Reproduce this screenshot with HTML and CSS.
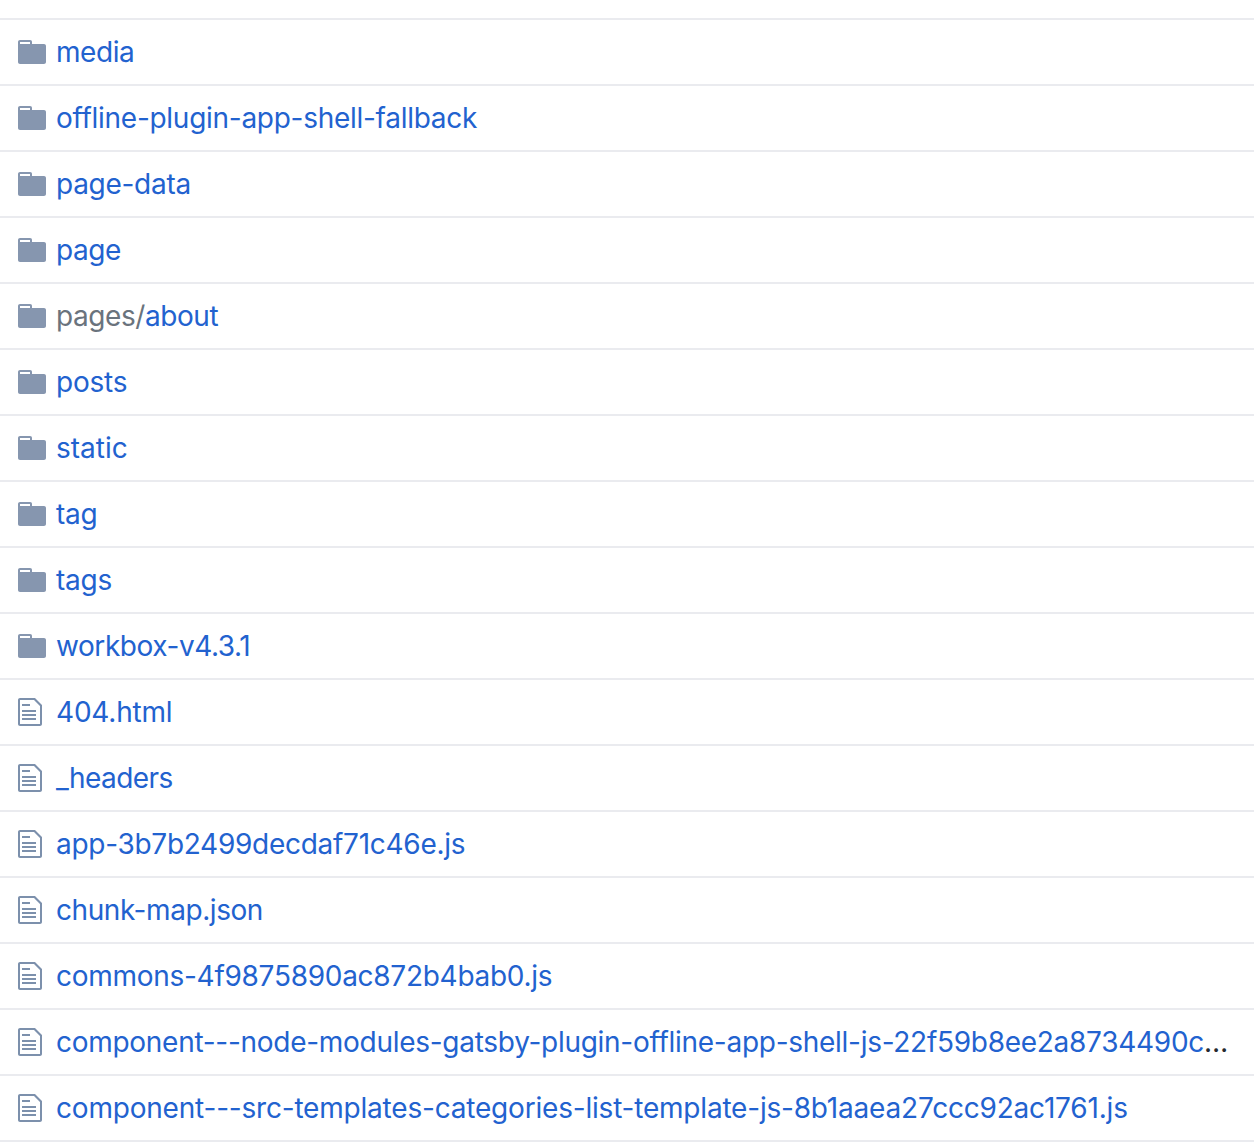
FILE: index.html
```html
<!DOCTYPE html>
<html lang="en">
<head>
<meta charset="utf-8">
<title>Files</title>
<link rel="stylesheet" href="styles.css">
</head>
<body>
<svg class="sprite" aria-hidden="true">
<symbol id="dir" viewBox="0 0 14 16"><path fill-rule="evenodd" d="M13 4H7V3c0-.66-.31-1-1-1H1c-.55 0-1 .45-1 1v10c0 .55.45 1 1 1h12c.55 0 1-.45 1-1V5c0-.55-.45-1-1-1zM6 4H1V3h5v1z"/></symbol>
<symbol id="file" viewBox="0 0 12 16"><path fill-rule="evenodd" d="M6 5H2V4h4v1zM2 8h7V7H2v1zm0 2h7V9H2v1zm0 2h7v-1H2v1zm10-7.500V14c0 .55-.45 1-1 1H1c-.55 0-1-.45-1-1V2c0-.55.45-1 1-1h7.500L12 4.500zM11 5L8 2H1v12h10V5z"/></symbol>
</svg>
<ul class="files">
<li class="row"><svg class="icon dir"><use href="#dir"/></svg><span class="name tight"><a>media</a></span></li>
<li class="row"><svg class="icon dir"><use href="#dir"/></svg><span class="name snug"><a>offline-plugin-app-shell-fallback</a></span></li>
<li class="row"><svg class="icon dir"><use href="#dir"/></svg><span class="name snug"><a>page-data</a></span></li>
<li class="row"><svg class="icon dir"><use href="#dir"/></svg><span class="name tight"><a>page</a></span></li>
<li class="row"><svg class="icon dir"><use href="#dir"/></svg><span class="name tight"><span class="parent">pages/</span><a>about</a></span></li>
<li class="row"><svg class="icon dir"><use href="#dir"/></svg><span class="name light"><a>posts</a></span></li>
<li class="row"><svg class="icon dir"><use href="#dir"/></svg><span class="name"><a>static</a></span></li>
<li class="row"><svg class="icon dir"><use href="#dir"/></svg><span class="name light"><a>tag</a></span></li>
<li class="row"><svg class="icon dir"><use href="#dir"/></svg><span class="name light"><a>tags</a></span></li>
<li class="row"><svg class="icon dir"><use href="#dir"/></svg><span class="name tight"><a>workbox-v4.3.1</a></span></li>
<li class="row"><svg class="icon file"><use href="#file"/></svg><span class="name light"><a>404.html</a></span></li>
<li class="row"><svg class="icon file"><use href="#file"/></svg><span class="name tighter"><a>_headers</a></span></li>
<li class="row"><svg class="icon file"><use href="#file"/></svg><span class="name snug"><a>app-3b7b2499decdaf71c46e.js</a></span></li>
<li class="row"><svg class="icon file"><use href="#file"/></svg><span class="name tight"><a>chunk-map.json</a></span></li>
<li class="row"><svg class="icon file"><use href="#file"/></svg><span class="name snug"><a>commons-4f9875890ac872b4bab0.js</a></span></li>
<li class="row"><svg class="icon file"><use href="#file"/></svg><span class="name snug"><a>component---node-modules-gatsby-plugin-offline-app-shell-js-22f59b8ee2a8734490c</a><span class="more">…</span></span></li>
<li class="row"><svg class="icon file"><use href="#file"/></svg><span class="name light"><a>component---src-templates-categories-list-template-js-8b1aaea27ccc92ac1761.js</a></span></li>
</ul>
</body>
</html>
```

FILE: styles.css
```css
body {
  margin: 0;
  background: #fff;
  color: #24292e;
  font: 430 28px/40px Inter, "Liberation Sans", sans-serif;
}
.sprite { display: none; }
.files {
  margin: 0;
  padding: 18px 0 0;
  list-style: none;
  border-bottom: 2px solid #eaebef;
}
.row {
  display: flex;
  align-items: center;
  box-sizing: border-box;
  height: 66px;
  padding: 0 0 0 18px;
  border-top: 2px solid #eaebef;
}
.icon {
  flex: none;
  height: 32px;
  fill: #8696af;
}
.file { fill: #7c90ac; }
.dir { width: 28px; margin-right: 10px; }
.file { width: 24px; margin-right: 14px; }
.name { white-space: nowrap; }
.name a { color: #2262cf; }
.parent { color: #6a737d; }

/* Tracking steps for the file names */
.light { letter-spacing: -0.2px; }
.snug { letter-spacing: -0.28px; }
.tight { letter-spacing: -0.43px; }
.tighter { letter-spacing: -0.6px; }
```
